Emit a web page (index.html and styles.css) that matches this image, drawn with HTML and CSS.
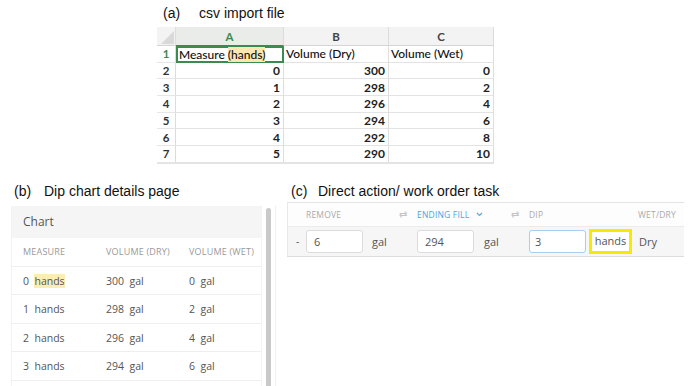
FILE: index.html
```html
<!DOCTYPE html>
<html>
<head>
<meta charset="utf-8">
<link rel="stylesheet" href="styles.css">
</head>
<body>
<div class="page">
  <section class="sec-a">
    <div class="title"><span class="lbl">(a)</span>csv import file</div>
    <div class="sheet">
      <div class="hc corner"><svg width="19" height="19" viewBox="0 0 19 19"><polygon points="17,4 17,17 4,17" fill="#d9d9d9"/></svg></div>
      <div class="hc sel">A</div>
      <div class="hc">B</div>
      <div class="hc">C</div>

      <div class="rn sel">1</div>
      <div class="c txt selcell"><span>Measure <span class="hl">(hands)</span></span></div>
      <div class="c txt">Volume (Dry)</div>
      <div class="c txt">Volume (Wet)</div>

      <div class="rn">2</div><div class="c">0</div><div class="c">300</div><div class="c">0</div>
      <div class="rn">3</div><div class="c">1</div><div class="c">298</div><div class="c">2</div>
      <div class="rn">4</div><div class="c">2</div><div class="c">296</div><div class="c">4</div>
      <div class="rn">5</div><div class="c">3</div><div class="c">294</div><div class="c">6</div>
      <div class="rn">6</div><div class="c">4</div><div class="c">292</div><div class="c">8</div>
      <div class="rn">7</div><div class="c">5</div><div class="c">290</div><div class="c">10</div>
    </div>
  </section>

  <div class="lower">
    <section class="sec-b">
      <div class="title"><span class="lbl2">(b)</span>Dip chart details page</div>
      <div class="bwrap">
        <div class="panel">
          <div class="phead">Chart</div>
          <div class="prow colh"><span>MEASURE</span><span>VOLUME (DRY)</span><span>VOLUME (WET)</span></div>
          <div class="prow"><span>0&nbsp; <span class="hl2">hands</span></span><span>300&nbsp; gal</span><span>0&nbsp; gal</span></div>
          <div class="prow"><span>1&nbsp; hands</span><span>298&nbsp; gal</span><span>2&nbsp; gal</span></div>
          <div class="prow"><span>2&nbsp; hands</span><span>296&nbsp; gal</span><span>4&nbsp; gal</span></div>
          <div class="prow"><span>3&nbsp; hands</span><span>294&nbsp; gal</span><span>6&nbsp; gal</span></div>
        </div>
        <div class="scroll"><div class="thumb"></div></div>
      </div>
    </section>

    <section class="sec-c">
      <div class="title"><span class="lbl3">(c)</span>Direct action/ work order task</div>
      <div class="task">
        <div class="th"></div>
        <div class="th span2"><span>REMOVE</span><span class="swap">&#8644;</span></div>
        <div class="th span2 blue"><span>ENDING FILL <svg class="chev" width="7" height="5" viewBox="0 0 7 5"><path d="M1 1 L3.5 3.5 L6 1" fill="none" stroke="#5aa9e0" stroke-width="1.2"/></svg></span><span class="swap">&#8644;</span></div>
        <div class="th span2">DIP</div>
        <div class="th right">WET/DRY</div>

        <div class="td dash">-</div>
        <div class="td"><div class="inp">6</div></div>
        <div class="td unit">gal</div>
        <div class="td"><div class="inp">294</div></div>
        <div class="td unit">gal</div>
        <div class="td"><div class="inp focus">3</div></div>
        <div class="td"><div class="hands">hands</div></div>
        <div class="td dry">Dry</div>
      </div>
    </section>
  </div>
</div>
</body>
</html>
```

FILE: styles.css
```css
html, body {
  margin: 0;
  padding: 0;
  background: #fff;
}
.page {
  width: 688px;
  height: 386px;
  overflow: hidden;
}
.title {
  font-family: "Liberation Sans", Arial, sans-serif;
  font-size: 14px;
  line-height: 18px;
  color: #111;
  white-space: nowrap;
}
.sec-a {
  padding-left: 157px;
  padding-top: 4px;
}
.sec-a .title {
  padding-left: 6px;
}
.lbl { display: inline-block; width: 36px; }
.lbl2 { display: inline-block; width: 30px; }
.lbl3 { display: inline-block; width: 27px; }

.sheet {
  margin-top: 5px;
  display: grid;
  grid-template-columns: 19px 108px 105px 105px;
  grid-template-rows: 19px repeat(7, 16.7px);
  width: 337px;
  font-family: Lato, "Open Sans", sans-serif;
  font-size: 12px;
  color: #222;
  border-bottom: 1px solid #e3e3e3;
}
.hc {
  background: #f3f3f3;
  border-right: 1px solid #dcdcdc;
  border-bottom: 1px solid #d4d4d4;
  font-weight: 700;
  color: #444;
  display: flex;
  align-items: center;
  justify-content: center;
  font-size: 11.5px;
}
.hc.corner { background: #f3f3f3; display: block; }
.hc.sel { color: #3b8a4f; background: #e9ece9; border-bottom: 1px solid #3b8a4f; }
.rn {
  border-right: 1px solid #dcdcdc;
  border-bottom: 1px solid #e6e6e6;
  font-weight: 700;
  color: #333;
  display: flex;
  align-items: center;
  justify-content: center;
  font-size: 11.5px;
}
.rn.sel { color: #3b8a4f; }
.c {
  border-right: 1px solid #dedede;
  border-bottom: 1px solid #e3e3e3;
  display: flex;
  align-items: center;
  justify-content: flex-end;
  padding-right: 3px;
  font-weight: 700;
  color: #222;
  box-sizing: border-box;
}
.c.txt {
  justify-content: flex-start;
  padding-left: 2px;
  font-weight: 500;
  color: #111;
  white-space: pre;
}
.c.selcell {
  border: 2px solid #3b8a4f;
  padding-left: 1px;
}
.hl { background: #fce6b2; }

.lower {
  display: flex;
  margin-top: 17px;
}
.sec-b {
  width: 276px;
  padding-left: 11px;
  box-sizing: border-box;
}
.sec-b .title { padding-left: 3px; padding-top: 1px; }
.bwrap {
  display: flex;
  margin-top: 6px;
  height: 200px;
}
.panel {
  width: 252px;
  background: #fff;
  font-family: "Open Sans", sans-serif;
  color: #555;
  border-left: 1px solid #f2f2f2;
}
.phead {
  height: 32px;
  background: #f5f5f5;
  font-size: 12px;
  line-height: 32px;
  padding-left: 11px;
  color: #555;
}
.prow {
  height: 28.5px;
  display: grid;
  grid-template-columns: 83px 83px 1fr;
  align-items: center;
  padding-left: 11px;
  border-bottom: 1px solid #efefef;
  font-size: 10.5px;
  color: #555;
  box-sizing: border-box;
}
.prow.colh {
  height: 29px;
  font-size: 9px;
  color: #999;
  letter-spacing: 0.2px;
}
.hl2 { background: #fcedb4; }
.scroll {
  width: 13px;
  display: flex;
  justify-content: center;
  padding-top: 2px;
  border-left: 1px solid #f4f4f4;
  border-right: 1px solid #f0f0f0;
}
.thumb {
  width: 5px;
  background: #c9c9c9;
  border-radius: 3px;
  height: 100%;
}

.sec-c {
  padding-left: 11px;
  width: 400px;
  box-sizing: border-box;
}
.sec-c .title { padding-left: 4px; padding-top: 1px; }
.task {
  margin-top: 2px;
  display: grid;
  grid-template-columns: 18px 57px 54px 58px 54px 57px 50px 1fr;
  grid-template-rows: 24px 29px;
  font-family: "Open Sans", sans-serif;
  border-top: 1px solid #e4e4e4;
  border-left: 1px solid #e8e8e8;
  border-bottom: 1px solid #dcdcdc;
  width: 396px;
}
.th {
  display: flex;
  align-items: center;
  font-size: 8.5px;
  color: #aaa;
  letter-spacing: 0.2px;
  background: #fdfdfd;
  border-bottom: 1px solid #ececec;
}
.th.span2 {
  grid-column: span 2;
  justify-content: space-between;
  padding-right: 10px;
}
.th.blue { color: #4ea4df; }
.chev { margin-left: 4px; vertical-align: 1px; }
.swap { color: #c4c4c4; font-size: 10px; }
.th.right { justify-content: flex-end; padding-right: 8px; }
.td {
  display: flex;
  align-items: center;
  background: #f6f6f6;
  font-size: 11px;
  color: #555;
}
.td.dash { padding-left: 8px; font-size: 10px; }
.td.unit { padding-left: 9px; }
.inp {
  width: 57px;
  height: 23px;
  box-sizing: border-box;
  background: #fff;
  border: 1px solid #dcdcdc;
  border-radius: 3px;
  padding-left: 7px;
  display: flex;
  align-items: center;
  color: #555;
}
.inp.focus { border-color: #a7cdef; padding-left: 5px; }
.hands {
  margin-left: 3px;
  height: 25px;
  width: 43px;
  box-sizing: border-box;
  border: 3px solid #f5ea00;
  background: #fff;
  display: flex;
  align-items: center;
  justify-content: center;
  color: #555;
  font-size: 11px;
  padding-bottom: 2px;
}
.td.dry { padding-left: 3px; }
```
